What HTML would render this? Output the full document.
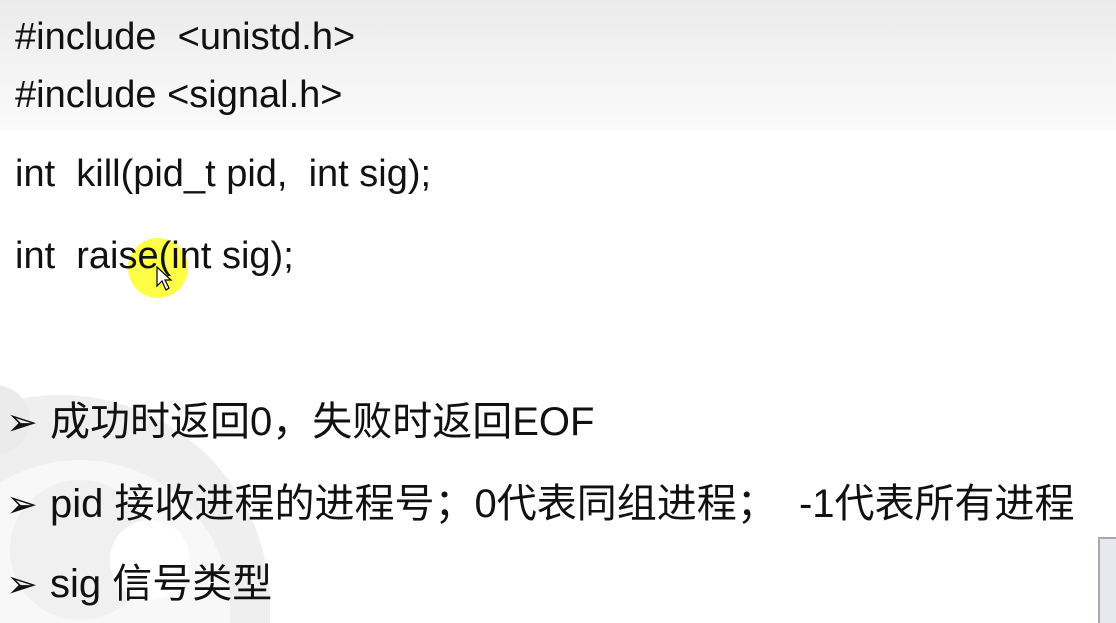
<!DOCTYPE html>
<html><head><meta charset="utf-8"><style>
html,body{margin:0;padding:0;width:1116px;height:623px;overflow:hidden}
body{position:relative;background:#fff;font-family:"Liberation Sans","Noto Sans CJK SC",sans-serif;color:#111}
.top{position:absolute;left:0;top:0;width:1116px;height:130px;background:linear-gradient(#ebebeb,#f6f6f6 70%,#fafafa)}
.t{position:absolute;white-space:pre;font-size:38px;line-height:1}
.c{position:absolute;white-space:pre;font-size:40px;line-height:1;font-family:"Liberation Sans","Noto Sans CJK SC",sans-serif}
.b{font-size:38px;display:inline-block;width:44px;font-family:"DejaVu Sans",sans-serif}
.ring{position:absolute;border-radius:50%}
</style></head><body>
<div class="top"></div>
<div class="ring" style="left:-150px;top:395px;width:420px;height:228px;border-radius:210px 210px 0 0;background:#efefef"></div>
<div class="ring" style="left:-70px;top:460px;width:300px;height:163px;border-radius:150px 150px 0 0;background:#f8f8f8"></div>
<div class="ring" style="left:10px;top:480px;width:140px;height:140px;background:#f0f0f0"></div>
<div class="ring" style="left:110px;top:520px;width:80px;height:80px;background:#fff"></div>
<div class="ring" style="left:-40px;top:385px;width:70px;height:70px;background:#ebebeb"></div>
<div class="t" style="left:15px;top:18px">#include  &lt;unistd.h&gt;</div>
<div class="t" style="left:15px;top:76px">#include &lt;signal.h&gt;</div>
<div class="t" style="left:15px;top:155px">int  kill(pid_t pid,  int sig);</div>
<div class="ring" style="left:128px;top:238px;width:60px;height:60px;background:#ffff33;opacity:.9"></div>
<div class="t" style="left:15px;top:237px">int  raise(int sig);</div>
<svg style="position:absolute;left:156px;top:266px" width="18" height="26" viewBox="0 0 18 26"><path d="M1 1 L1 20 L6 15 L10 24 L13 22 L9 14 L15 14 Z" fill="#fff" stroke="#000" stroke-width="1.2"/></svg>
<div class="c" style="left:6px;top:402px"><span class="b">➢</span>成功时返回0，失败时返回EOF</div>
<div class="c" style="left:6px;top:484px"><span class="b">➢</span>pid 接收进程的进程号；0代表同组进程；  -1代表所有进程</div>
<div class="c" style="left:6px;top:564px"><span class="b">➢</span>sig 信号类型</div>
<div style="position:absolute;left:1098px;top:537px;width:18px;height:86px;box-sizing:border-box;border:2px solid #aaa;border-right:none;border-bottom:none;background:#e8e8f0"></div>
</body></html>
